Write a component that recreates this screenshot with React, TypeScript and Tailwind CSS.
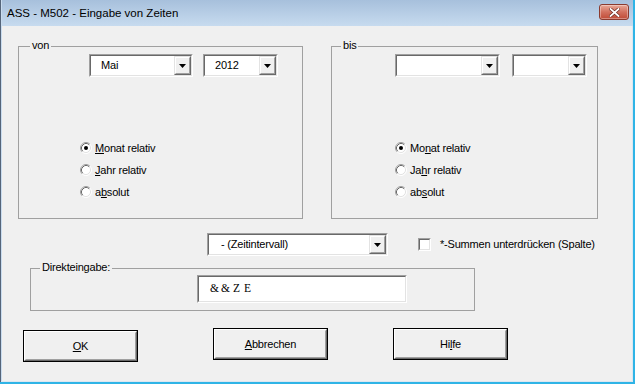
import React from "react";

const F = "font-['Liberation_Sans',Arial,sans-serif]";

function Arrow() {
  return (
    <svg width="7" height="4" viewBox="0 0 7 4">
      <polygon points="0,0 7,0 3.5,4" fill="#000" />
    </svg>
  );
}

function Combo({ w, text, pl = 10 }: { w: number; text?: string; pl?: number }) {
  return (
    <div
      className="h-[23px] border border-t-[#a0a0a0] border-l-[#a0a0a0] border-b-white border-r-white"
      style={{ width: w }}
    >
      <div className="h-full flex border border-t-[#696969] border-l-[#696969] border-b-[#e3e3e3] border-r-[#e3e3e3]">
        <div className="flex-1 bg-white flex items-center text-[11px] text-black" style={{ paddingLeft: pl }}>
          {text}
        </div>
        <div className="w-[17px] h-full border border-t-[#e3e3e3] border-l-[#e3e3e3] border-b-[#696969] border-r-[#696969]">
          <div className="w-full h-full bg-[#f0f0f0] flex items-center justify-center border border-t-white border-l-white border-b-[#a0a0a0] border-r-[#a0a0a0]">
            <Arrow />
          </div>
        </div>
      </div>
    </div>
  );
}

function Radio({ checked }: { checked?: boolean }) {
  return (
    <svg width="12" height="12" viewBox="0 0 12 12" className="shrink-0">
      <circle cx="6" cy="6" r="5" fill="#fff" />
      <path d="M2.11 9.89 A5.5 5.5 0 0 1 9.89 2.11" stroke="#a0a0a0" fill="none" />
      <path d="M9.89 2.11 A5.5 5.5 0 0 1 2.11 9.89" stroke="#ffffff" fill="none" />
      <path d="M2.82 9.18 A4.5 4.5 0 0 1 9.18 2.82" stroke="#696969" fill="none" />
      <path d="M9.18 2.82 A4.5 4.5 0 0 1 2.82 9.18" stroke="#e3e3e3" fill="none" />
      {checked && <circle cx="6" cy="6" r="2" fill="#000" />}
    </svg>
  );
}

function RadioRow({ checked, children }: { checked?: boolean; children: React.ReactNode }) {
  return (
    <div className="h-[22px] flex items-center gap-[3px] text-[11px] text-black">
      <Radio checked={checked} />
      <span>{children}</span>
    </div>
  );
}

function Group({
  label,
  labelLeft,
  w,
  h,
  children,
}: {
  label: string;
  labelLeft: number;
  w: number;
  h: number;
  children: React.ReactNode;
}) {
  return (
    <div className="relative border border-[#a0a0a0] shrink-0" style={{ width: w, height: h }}>
      <span
        className="absolute top-[-8px] px-[2px] bg-[#f0f0f0] text-[11px] leading-[13px] text-black"
        style={{ left: labelLeft }}
      >
        {label}
      </span>
      {children}
    </div>
  );
}

function Button({ children, className = "" }: { children: React.ReactNode; className?: string }) {
  return (
    <div className={`w-[115px] h-[32px] border border-black shrink-0 ${className}`}>
      <div className="w-full h-full border border-t-white border-l-white border-b-[#696969] border-r-[#696969]">
        <div className="w-full h-full flex items-center justify-center text-[11px] text-black border border-transparent border-b-[#a0a0a0] border-r-[#a0a0a0]">
          {children}
        </div>
      </div>
    </div>
  );
}

function CloseButton() {
  return (
    <div className="w-[30px] h-[16px] rounded-[3px] border border-[#8b3b2f] bg-gradient-to-b from-[#e8a898] via-[#d2705e] to-[#c04a36] flex items-center justify-center shadow-[inset_0_0_0_1px_rgba(255,255,255,0.35)]">
      <svg width="11" height="9" viewBox="0 0 11 9">
        <path d="M1.5 1 L9.5 8 M9.5 1 L1.5 8" stroke="#6b2a20" strokeWidth="3.2" strokeLinecap="square" />
        <path d="M1.5 1 L9.5 8 M9.5 1 L1.5 8" stroke="#ffffff" strokeWidth="1.8" strokeLinecap="square" />
      </svg>
    </div>
  );
}

export default function App() {
  return (
    <div className={`w-[635px] h-[384px] ${F} bg-[#2fb4e6] overflow-hidden`}>
      <div className="w-[633px] h-[382px] border-l border-[#55657a] flex flex-col">
        <div className="h-[26px] shrink-0 flex items-start justify-between bg-gradient-to-b from-[#a7c0dc] to-[#c7dbef] border-l border-[#c9dcef]">
          <span className="ml-[5px] mt-[5px] text-[11.5px] leading-[16px] text-black">
            ASS - M502 - Eingabe von Zeiten
          </span>
          <div className="mt-[4px] mr-[4px]">
            <CloseButton />
          </div>
        </div>
        <div className="flex-1 bg-[#f0f0f0] border-l border-[#c9dcef] border-r border-r-[#dce6f0] flex flex-col tracking-[-0.2px]">
          {/* group boxes */}
          <div className="flex mt-[20px] ml-[16px] gap-[28px]">
            <Group label="von" labelLeft={11} w={285} h={173}>
              <div className="flex flex-col">
                <div className="flex gap-[10px] ml-[70px] mt-[7px]">
                  <Combo w={104} text="Mai" />
                  <Combo w={75} text="2012" />
                </div>
                <div className="flex flex-col ml-[61px] mt-[60px]">
                  <RadioRow checked>
                    <u>M</u>onat relativ
                  </RadioRow>
                  <RadioRow>
                    <u>J</u>ahr relativ
                  </RadioRow>
                  <RadioRow>
                    a<u>b</u>solut
                  </RadioRow>
                </div>
              </div>
            </Group>
            <Group label="bis" labelLeft={9} w={267} h={173}>
              <div className="flex flex-col">
                <div className="flex gap-[12px] ml-[63px] mt-[7px]">
                  <Combo w={105} />
                  <Combo w={75} />
                </div>
                <div className="flex flex-col ml-[63px] mt-[60px]">
                  <RadioRow checked>
                    Mo<u>n</u>at relativ
                  </RadioRow>
                  <RadioRow>
                    Ja<u>h</u>r relativ
                  </RadioRow>
                  <RadioRow>
                    ab<u>s</u>olut
                  </RadioRow>
                </div>
              </div>
            </Group>
          </div>

          {/* interval row */}
          <div className="flex items-center mt-[14px] ml-[205px]">
            <Combo w={181} text="- (Zeitintervall)" pl={12} />
            <div className="ml-[30px] w-[13px] h-[13px] border border-t-[#a0a0a0] border-l-[#a0a0a0] border-b-white border-r-white">
              <div className="w-full h-full bg-white border border-t-[#696969] border-l-[#696969] border-b-[#e3e3e3] border-r-[#e3e3e3]" />
            </div>
            <span className="ml-[9px] text-[11px] text-black">*-Summen unterdrücken (Spalte)</span>
          </div>

          {/* Direkteingabe */}
          <div className="mt-[12px] ml-[28px]">
            <Group label="Direkteingabe:" labelLeft={9} w={445} h={43}>
              <div className="ml-[166px] mt-[6px] w-[210px] h-[28px] border border-t-[#a0a0a0] border-l-[#a0a0a0] border-b-white border-r-white">
                <div className="w-full h-full bg-white flex items-center pl-[10px] border border-t-[#696969] border-l-[#696969] border-b-[#e3e3e3] border-r-[#e3e3e3] font-['Liberation_Serif',serif] text-[11.5px] tracking-normal text-black">
                  <span className="shrink-0 w-[11px] text-center">&amp;</span>
                  <span className="shrink-0 w-[11px] text-center">&amp;</span>
                  <span className="shrink-0 w-[11px] text-center">Z</span>
                  <span className="shrink-0 w-[11px] text-center">E</span>
                </div>
              </div>
            </Group>
          </div>

          {/* buttons */}
          <div className="flex items-start mt-[17px] ml-[21px]">
            <Button className="mt-[2px]">
              <span>
                <u>O</u>K
              </span>
            </Button>
            <Button className="ml-[75px]">
              <span>
                <u>A</u>bbrechen
              </span>
            </Button>
            <Button className="ml-[65px]">
              <span>
                Hi<u>l</u>fe
              </span>
            </Button>
          </div>
        </div>
        <div className="h-px bg-[#dce6f0]" />
      </div>
    </div>
  );
}
